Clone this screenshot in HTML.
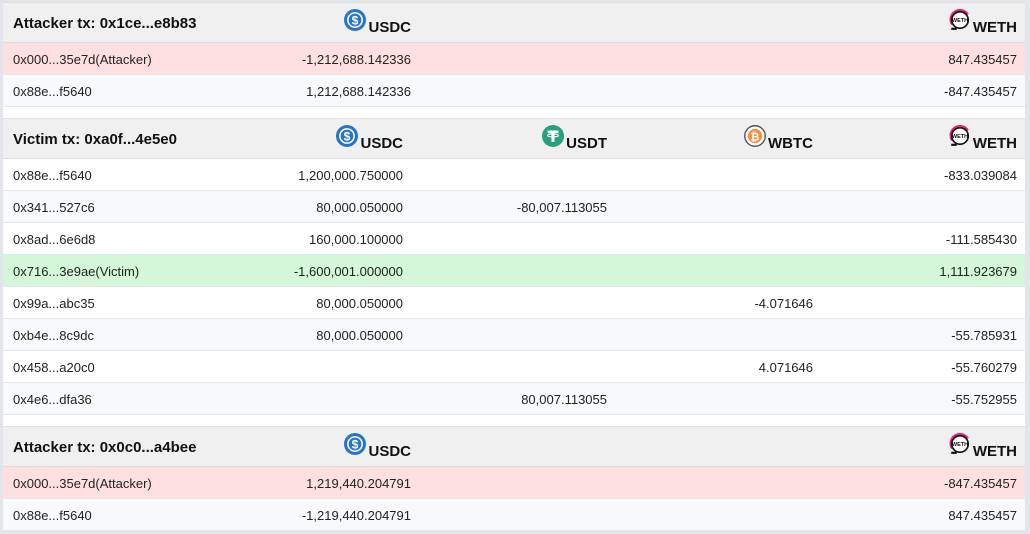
<!DOCTYPE html><html><head><style>
*{margin:0;padding:0;box-sizing:border-box}
body{width:1030px;height:534px;background:#e2e5ea;font-family:"Liberation Sans",sans-serif;position:relative;overflow:hidden}
.wrap{position:absolute;left:3px;top:3px;width:1022px;height:528px;background:#fff}
.r{position:absolute;left:0;width:1022px;height:32px;border-bottom:1px solid #e4e6ea;font-size:13px;color:#222}
.h{height:41px;background:#f0f0f0;border-bottom:1px solid #dcdcdc;border-top:1px solid #e0e0e0;font-weight:bold;font-size:15px;color:#111}
.c{position:absolute;top:9px;white-space:nowrap}
.h .c{top:16px}
.t{left:10px}
.h .t{top:12px}
.odd{background:#fff}.ev{background:#f8f9fb}.att{background:#ffe0e0}.vic{background:#d3f7d8}
.ic{display:inline-block;width:22px;height:22px;vertical-align:top;position:relative;top:-10px;margin-right:2px}
</style></head><body><div class="wrap">
<svg width="0" height="0" style="position:absolute"><defs>
<symbol id="usdc" viewBox="0 0 20 20"><circle cx="10" cy="10" r="10" fill="#2775ca"/><circle cx="10" cy="10" r="6.5" fill="none" stroke="#fff" stroke-width="1.4"/><text x="10" y="14" font-size="11" font-weight="bold" fill="#fff" text-anchor="middle" font-family="Liberation Sans">$</text></symbol>
<symbol id="usdt" viewBox="0 0 20 20"><circle cx="10" cy="10" r="10" fill="#26a17b"/><path d="M5 5h10v2.5h-3.6v8h-2.8v-8H5z" fill="#fff"/><ellipse cx="10" cy="9.5" rx="5" ry="1.3" fill="none" stroke="#fff" stroke-width="0.9"/></symbol>
<symbol id="wbtc" viewBox="0 0 20 20"><circle cx="10" cy="10" r="9.3" fill="#fff" stroke="#5a5564" stroke-width="1.3"/><circle cx="10" cy="10" r="6.5" fill="#f09242"/><text x="10" y="14" font-size="10" font-weight="bold" fill="#fff" text-anchor="middle" font-family="Liberation Sans">₿</text></symbol>
<symbol id="weth" viewBox="0 0 20 20"><path d="M3 14A8 8 0 0 1 17 5" fill="none" stroke="#ec1e79" stroke-width="2.4"/><circle cx="10" cy="10" r="7.5" fill="#fff" stroke="#111" stroke-width="1.5"/><path d="M2 18h5" stroke="#111" stroke-width="2"/><text x="10" y="12" font-size="5" font-weight="bold" fill="#111" text-anchor="middle" font-family="Liberation Sans">WETH</text></symbol>
</defs></svg>

<div class="r h" style="top:-1px"><span class="c t">Attacker tx: 0x1ce...e8b83</span><span class="c" style="right:614px"><svg class="ic"><use href="#usdc"/></svg>USDC</span><span class="c" style="right:8px"><svg class="ic"><use href="#weth"/></svg>WETH</span></div>
<div class="r att" style="top:40px"><span class="c t">0x000...35e7d(Attacker)</span><span class="c" style="right:614px">-1,212,688.142336</span><span class="c" style="right:8px">847.435457</span></div>
<div class="r ev" style="top:72px"><span class="c t">0x88e...f5640</span><span class="c" style="right:614px">1,212,688.142336</span><span class="c" style="right:8px">-847.435457</span></div>

<div class="r h" style="top:115px"><span class="c t">Victim tx: 0xa0f...4e5e0</span><span class="c" style="right:622px"><svg class="ic"><use href="#usdc"/></svg>USDC</span><span class="c" style="right:418px"><svg class="ic"><use href="#usdt"/></svg>USDT</span><span class="c" style="right:212px"><svg class="ic"><use href="#wbtc"/></svg>WBTC</span><span class="c" style="right:8px"><svg class="ic"><use href="#weth"/></svg>WETH</span></div>
<div class="r odd" style="top:156px"><span class="c t">0x88e...f5640</span><span class="c" style="right:622px">1,200,000.750000</span><span class="c" style="right:8px">-833.039084</span></div>
<div class="r ev" style="top:188px"><span class="c t">0x341...527c6</span><span class="c" style="right:622px">80,000.050000</span><span class="c" style="right:418px">-80,007.113055</span></div>
<div class="r odd" style="top:220px"><span class="c t">0x8ad...6e6d8</span><span class="c" style="right:622px">160,000.100000</span><span class="c" style="right:8px">-111.585430</span></div>
<div class="r vic" style="top:252px"><span class="c t">0x716...3e9ae(Victim)</span><span class="c" style="right:622px">-1,600,001.000000</span><span class="c" style="right:8px">1,111.923679</span></div>
<div class="r odd" style="top:284px"><span class="c t">0x99a...abc35</span><span class="c" style="right:622px">80,000.050000</span><span class="c" style="right:212px">-4.071646</span></div>
<div class="r ev" style="top:316px"><span class="c t">0xb4e...8c9dc</span><span class="c" style="right:622px">80,000.050000</span><span class="c" style="right:8px">-55.785931</span></div>
<div class="r odd" style="top:348px"><span class="c t">0x458...a20c0</span><span class="c" style="right:212px">4.071646</span><span class="c" style="right:8px">-55.760279</span></div>
<div class="r ev" style="top:380px"><span class="c t">0x4e6...dfa36</span><span class="c" style="right:418px">80,007.113055</span><span class="c" style="right:8px">-55.752955</span></div>

<div class="r h" style="top:423px"><span class="c t">Attacker tx: 0x0c0...a4bee</span><span class="c" style="right:614px"><svg class="ic"><use href="#usdc"/></svg>USDC</span><span class="c" style="right:8px"><svg class="ic"><use href="#weth"/></svg>WETH</span></div>
<div class="r att" style="top:464px"><span class="c t">0x000...35e7d(Attacker)</span><span class="c" style="right:614px">1,219,440.204791</span><span class="c" style="right:8px">-847.435457</span></div>
<div class="r ev" style="top:496px"><span class="c t">0x88e...f5640</span><span class="c" style="right:614px">-1,219,440.204791</span><span class="c" style="right:8px">847.435457</span></div>
</div></body></html>
